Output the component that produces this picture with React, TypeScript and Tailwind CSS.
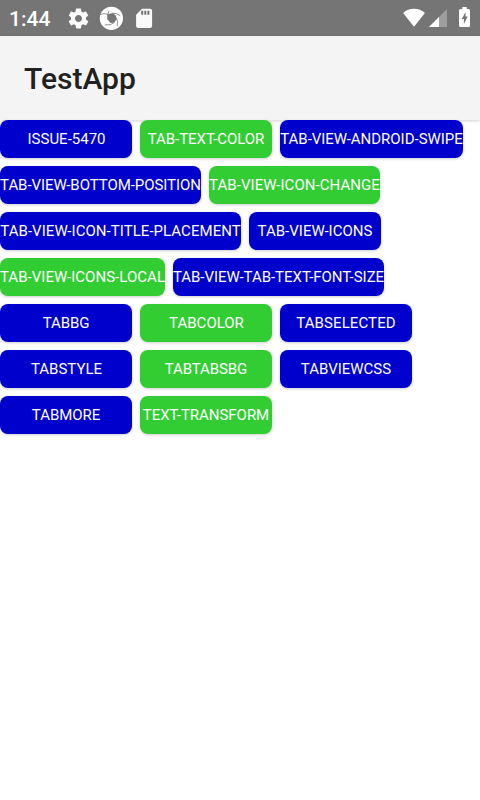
type Item = { label: string; box: string };

const BLUE = "bg-[#0000cd]";
const GREEN = "bg-[#32cd32]";

const rows: Item[][] = [
  [
    { label: "ISSUE-5470", box: `${BLUE} w-[132px] pl-px` },
    { label: "TAB-TEXT-COLOR", box: `${GREEN} w-[132px] tracking-[-0.05px]` },
    { label: "TAB-VIEW-ANDROID-SWIPE", box: `${BLUE} w-[183px] tracking-[-0.02px]` },
  ],
  [
    { label: "TAB-VIEW-BOTTOM-POSITION", box: `${BLUE} w-[201px] tracking-[-0.06px]` },
    { label: "TAB-VIEW-ICON-CHANGE", box: `${GREEN} w-[171px] tracking-[0.06px]` },
  ],
  [
    { label: "TAB-VIEW-ICON-TITLE-PLACEMENT", box: `${BLUE} w-[241px] tracking-[0.05px]` },
    { label: "TAB-VIEW-ICONS", box: `${BLUE} w-[132px] tracking-[0.03px]` },
  ],
  [
    { label: "TAB-VIEW-ICONS-LOCAL", box: `${GREEN} w-[165px] tracking-[0.04px]` },
    { label: "TAB-VIEW-TAB-TEXT-FONT-SIZE", box: `${BLUE} w-[211px] tracking-[-0.02px]` },
  ],
  [
    { label: "TABBG", box: `${BLUE} w-[132px] tracking-[-0.1px]` },
    { label: "TABCOLOR", box: `${GREEN} w-[132px] pl-px` },
    { label: "TABSELECTED", box: `${BLUE} w-[132px] tracking-[0.1px]` },
  ],
  [
    { label: "TABSTYLE", box: `${BLUE} w-[132px] pl-px` },
    { label: "TABTABSBG", box: `${GREEN} w-[132px] tracking-[-0.1px]` },
    { label: "TABVIEWCSS", box: `${BLUE} w-[132px]` },
  ],
  [
    { label: "TABMORE", box: `${BLUE} w-[132px] tracking-[-0.05px]` },
    { label: "TEXT-TRANSFORM", box: `${GREEN} w-[132px] tracking-[-0.03px]` },
  ],
];

function StatusBar() {
  return (
    <header className="flex h-9 items-center bg-[#757575] pl-[9px] pr-[10px] text-white">
      <span className="w-[58px] pt-px text-[21px] leading-6 font-medium">1:44</span>
      <svg className="h-6 w-6" viewBox="0.5 -0.4 24 24" fill="#fafafa">
        <path d="M19.43 12.98c.04-.32.07-.64.07-.98s-.03-.66-.07-.98l2.11-1.65c.19-.15.24-.42.12-.64l-2-3.46c-.12-.22-.39-.3-.61-.22l-2.49 1c-.52-.4-1.08-.73-1.69-.98l-.38-2.65C14.46 2.18 14.25 2 14 2h-4c-.25 0-.46.18-.49.42l-.38 2.65c-.61.25-1.17.59-1.69.98l-2.49-1c-.23-.09-.49 0-.61.22l-2 3.46c-.13.22-.07.49.12.64l2.11 1.65c-.04.32-.07.65-.07.98s.03.66.07.98l-2.11 1.65c-.19.15-.24.42-.12.64l2 3.46c.12.22.39.3.61.22l2.49-1c.52.4 1.08.73 1.69.98l.38 2.65c.03.24.24.42.49.42h4c.25 0 .46-.18.49-.42l.38-2.65c.61-.25 1.17-.59 1.69-.98l2.49 1c.23.09.49 0 .61-.22l2-3.46c.12-.22.07-.49-.12-.64l-2.11-1.65zM12 15.5c-1.93 0-3.5-1.57-3.5-3.5s1.57-3.5 3.5-3.5 3.5 1.57 3.5 3.5-1.57 3.5-3.5 3.5z" />
      </svg>
      <svg className="ml-2 h-6 w-6" viewBox="0 0 24 24">
        <circle cx="12.4" cy="12.3" r="11.6" fill="#fff" />
        <path d="M9 8.2 13.5 7 17 9.8 17.4 13.6 15.4 16.6 11.4 17 8.6 13.4z" fill="#757575" />
        <g fill="none" stroke="#757575" strokeWidth="0.8">
          <path d="M0.8 8.6Q4.5 6.8 9.2 8.3" />
          <path d="M13.2 7.2Q18 6.8 21.3 9.8" />
          <path d="M17.2 11.5Q19.5 15 18.2 20.2" />
          <path d="M15.6 16.4Q11.5 20 5.8 18.8" />
          <path d="M10 5.2Q7.6 8.6 8.8 13.5" />
        </g>
      </svg>
      <svg className="ml-[9px] h-6 w-6" viewBox="0 0 24 24" fill="#fafafa">
        <path d="M18.1 2.8H10L4.1 8.8V20.1c0 1.1.9 2 2 2h12c1.1 0 2-.9 2-2V4.8c0-1.1-.9-2-2-2zM11.2 8.8H9.2v-4h2v4zm3.1 0h-2v-4h2v4zm3.1 0h-2v-4h2v4z" />
      </svg>
      <div className="ml-auto flex items-center">
        <svg className="h-6 w-[22px]" viewBox="0 0 22 24" fill="#fff">
          <path d="M11 20.8.1 7Q4.8 2.8 11 2.8T21.9 7z" />
        </svg>
        <svg className="ml-1 h-6 w-[18px]" viewBox="0 0 18 24">
          <path d="M18 3v18H0z" fill="#9e9e9e" />
          <path d="M10 11v10H0z" fill="#fff" />
        </svg>
        <svg className="ml-3 h-6 w-[11px]" viewBox="0 0 11 24" fill="#fff">
          <path fillRule="evenodd" d="M3.3 1h4.4v2h1.8q1.5 0 1.5 1.5v15Q11 21 9.5 21h-8Q0 21 0 19.5v-15Q0 3 1.5 3h1.8zM6.5 6 2.8 13h2.1v5l3.8-7.4H6.5z" />
        </svg>
      </div>
    </header>
  );
}

export default function App() {
  return (
    <div className="flex h-[800px] w-[480px] flex-col overflow-hidden bg-white font-[Roboto,sans-serif]">
      <StatusBar />
      <div className="flex h-[84px] items-center bg-[#f4f4f4] pl-6 shadow-[0_1px_3px_rgba(0,0,0,0.18)]">
        <h1 className="pt-0.5 text-[30px] leading-9 font-medium text-[#212121]">TestApp</h1>
      </div>
      <main className="flex flex-col gap-2">
        {rows.map((row, i) => (
          <div key={i} className="flex gap-2">
            {row.map((item) => (
              <button
                key={item.label}
                className={`flex h-[38px] items-center justify-center rounded-lg text-[15px] whitespace-nowrap text-white shadow-[0_1px_3px_rgba(0,0,0,0.2)] ${item.box}`}
              >
                {item.label}
              </button>
            ))}
          </div>
        ))}
      </main>
    </div>
  );
}
